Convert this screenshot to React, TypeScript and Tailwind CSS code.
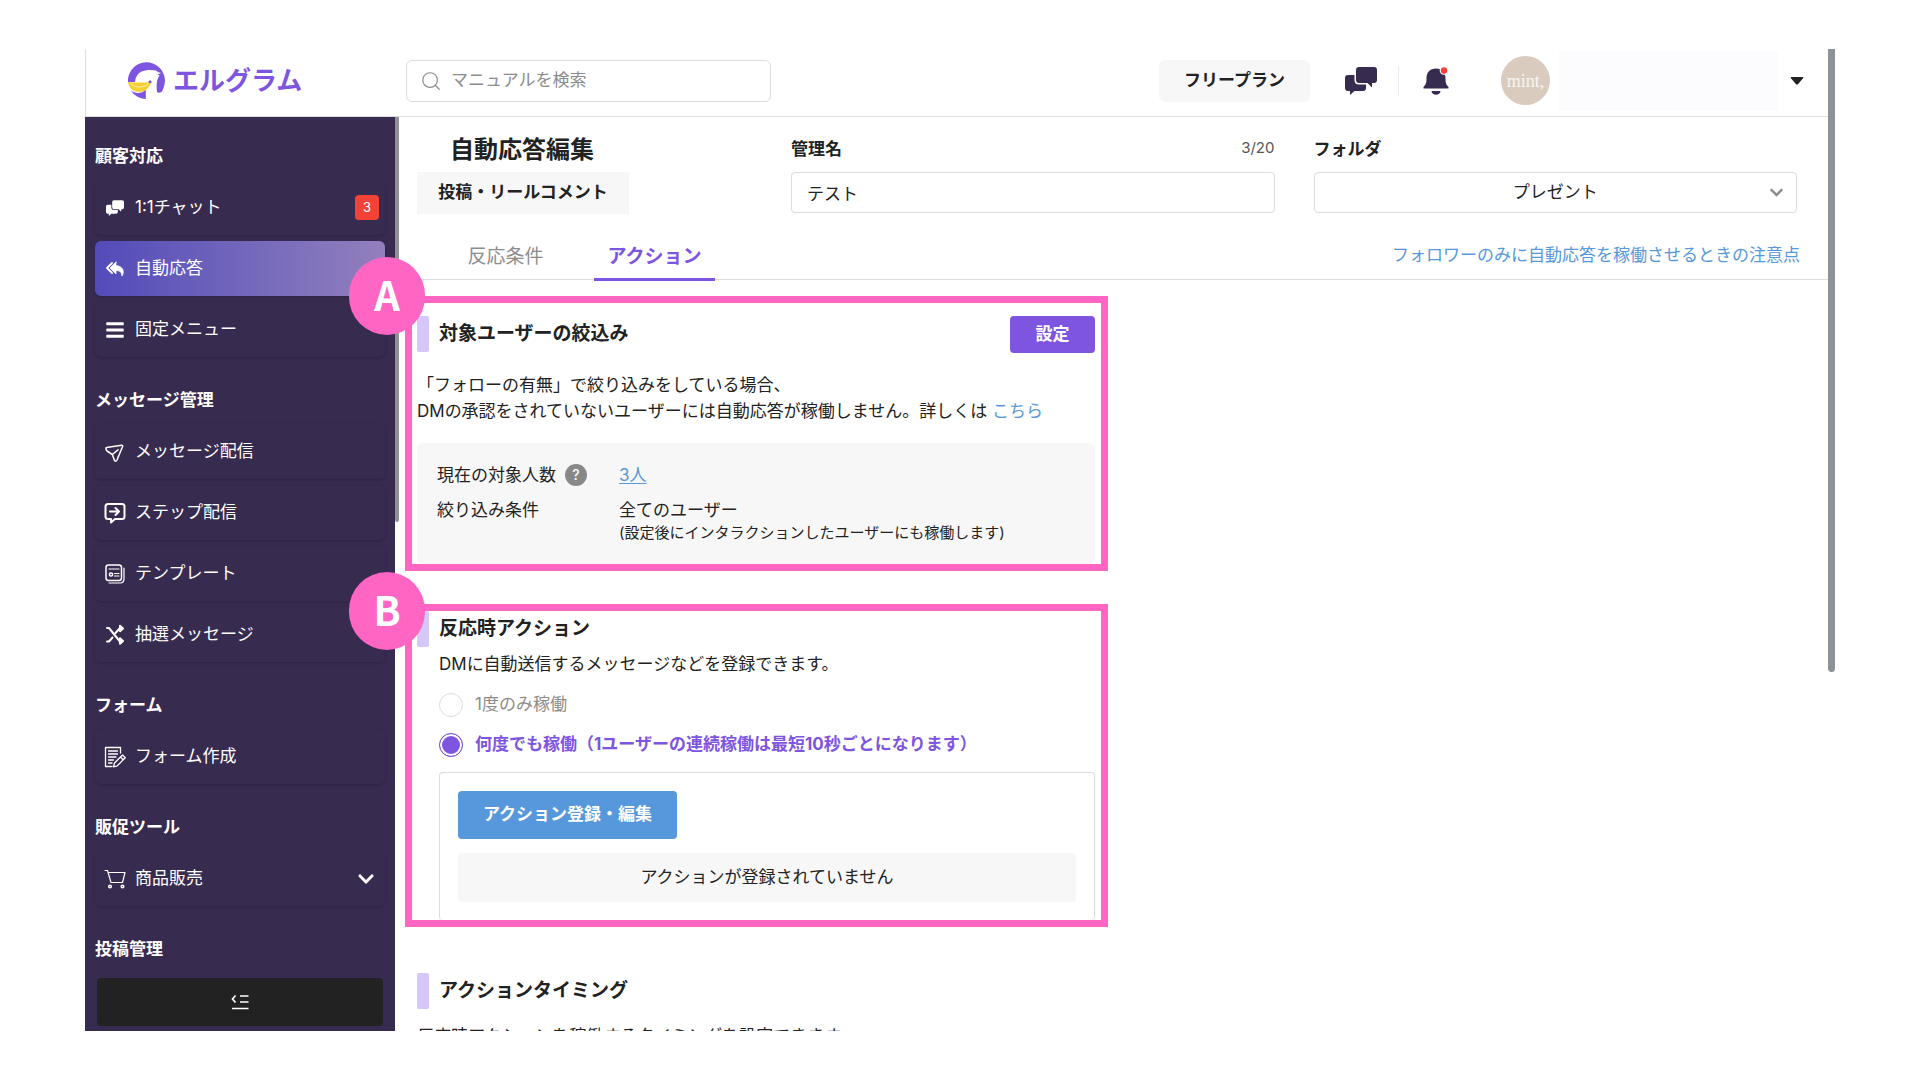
import React, { useState } from 'react';
import { FaBars, FaChevronDown } from 'react-icons/fa';
import { FiSearch } from 'react-icons/fi';

interface MenuItem {
    label: string;
    icon: React.ReactNode;
    badge?: number;
    active?: boolean;
    expandable?: boolean;
}

interface MenuGroup {
    title: string;
    items: MenuItem[];
}

const Logo = () => (
    <svg viewBox="0 0 37 37" className="h-[37px] w-[37px]" aria-hidden="true">
        <path
            d="M0 20 A18.500 18.500 0 1 1 35.500 26 Q34.500 29 33.500 30 Q31 31.500 29 30 C28.200 24 28.500 17 31.500 13.500 L29.500 12.500 L33 11 C31 10.500 29.500 10 28 8.500 C23 7.500 17 7.800 13.500 9.500 C9.500 11.500 7.500 15 7 20 Z"
            fill="#7d55e0"
        />
        <path d="M0 20 C7 21 15 20.500 23 20 C21.500 26 17 30 11 30 C5 30 1 26 0 20 Z" fill="#f8cf30" />
        <path d="M3 21.500 C7 26 15 26.500 20.500 21.500" fill="none" stroke="#fff" strokeWidth="0.700" />
        <path d="M3 28.500 C7.500 32 13.500 31.500 17.800 28 V37 C11.500 36.800 6 33.500 3 28.500 Z" fill="#7d55e0" />
        <circle cx="22" cy="19.800" r="1.500" fill="#7d55e0" />
    </svg>
);

const ChatIcon = ({ className, gap }: { className: string; gap: string }) => (
    <svg viewBox="0 0 32 28" className={className} aria-hidden="true">
        <path d="M3 8 H19 Q21 8 21 10 V21 Q21 24 18 24 H9.500 L5 28 V24 H3 Q0 24 0 21 V11 Q0 8 3 8 Z" fill="currentColor" />
        <path d="M14 0 H29 Q32 0 32 3 V13 Q32 16 29 16 H27 V20.500 L22.500 16 H14 Q11 16 11 13 V3 Q11 0 14 0 Z" fill="currentColor" stroke={gap} strokeWidth="3" paintOrder="stroke" />
    </svg>
);

const BellIcon = () => (
    <svg viewBox="0 0 28 30" className="h-[30px] w-7" aria-hidden="true">
        <path d="M13 2.500 C19 2.500 22.500 6.500 22.500 12 C22.500 17 23 18.500 25.500 21 V22.500 H0.500 V21 C3 18.500 3.500 17 3.500 12 C3.500 6.500 7 2.500 13 2.500 Z" fill="#382b50" />
        <path d="M8.500 25 H17.500 C17.200 27.500 15.500 28.800 13 28.800 C10.500 28.800 8.800 27.500 8.500 25 Z" fill="#382b50" />
        <circle cx="21" cy="4.500" r="4.300" fill="#fff" />
        <circle cx="21" cy="4.500" r="3.200" fill="#f44336" />
    </svg>
);

const LineIcon = ({ children }: { children: React.ReactNode }) => (
    <svg
        viewBox="0 0 22 22"
        className="h-[22px] w-[22px]"
        fill="none"
        stroke="currentColor"
        strokeWidth="1.500"
        strokeLinecap="round"
        strokeLinejoin="round"
        aria-hidden="true"
    >
        {children}
    </svg>
);

const menuGroups: MenuGroup[] = [
    {
        title: '顧客対応',
        items: [
            { label: '1:1チャット', icon: <ChatIcon className="h-4 w-[18px]" gap="#382b50" />, badge: 3 },
            {
                label: '自動応答',
                active: true,
                icon: (
                    <LineIcon>
                        <path d="M8 5 L3 10 L8 15" strokeWidth="1.800" />
                        <path d="M12 4 L6 10 L12 16 V12.500 C16 12.500 17.500 14 18 18 C21 13 18.500 8 12 7.500 Z" fill="currentColor" strokeWidth="0.800" />
                    </LineIcon>
                ),
            },
            { label: '固定メニュー', icon: <FaBars className="h-5 w-5" /> },
        ],
    },
    {
        title: 'メッセージ管理',
        items: [
            {
                label: 'メッセージ配信',
                icon: (
                    <LineIcon>
                        <path d="M2 7.500 Q1.800 6.800 2.600 6.600 L17.500 4.300 Q19 4.200 18.600 5.500 L13 19 Q12 21 10.500 19.500 L8.300 13.500 L3 10 Q1.800 9 2 7.500 Z M8.300 13.500 L14 8.800" />
                    </LineIcon>
                ),
            },
            {
                label: 'ステップ配信',
                icon: (
                    <LineIcon>
                        <path d="M4 2 H18 Q20.500 2 20.500 4.500 V14.500 Q20.500 17 18 17 H11 L7 20.500 V17 H4 Q1.500 17 1.500 14.500 V4.500 Q1.500 2 4 2 Z M6 9.500 H15 M11.500 6 L15 9.500 L11.500 13" strokeWidth="2" />
                    </LineIcon>
                ),
            },
            {
                label: 'テンプレート',
                icon: (
                    <LineIcon>
                        <rect x="2" y="2" width="15.500" height="15.500" rx="2.500" />
                        <path d="M5 20 H16 Q20 20 20 16 V5 M5 6 H15 M10.500 10.500 H15 M10.500 13 H15" strokeWidth="1.200" />
                        <circle cx="7" cy="11.500" r="1.600" />
                    </LineIcon>
                ),
            },
            {
                label: '抽選メッセージ',
                icon: (
                    <LineIcon>
                        <path d="M3 4 H5 L15.500 17 H18 M3 17.500 H5 L8.500 13.500 M11.500 9 L15.500 4.500 H18 M16 1.800 L19 4.500 L16 7.200 Z M16 14.200 L19 17 L16 19.800 Z" strokeWidth="2" />
                    </LineIcon>
                ),
            },
        ],
    },
    {
        title: 'フォーム',
        items: [
            {
                label: 'フォーム作成',
                icon: (
                    <LineIcon>
                        <path d="M16.500 7 V1.500 H1.500 V20.500 H8 M4.500 5 H13.500 M4.500 8 H13.500 M4.500 11 H12 M4.500 14 H9.500 M4.500 17 H8" strokeWidth="1.300" />
                        <path d="M9.500 20.800 L10.500 17 L18.500 9 L21.200 11.800 L13.300 19.800 Z M16.500 11 L19.200 13.800" strokeWidth="1.300" />
                    </LineIcon>
                ),
            },
        ],
    },
    {
        title: '販促ツール',
        items: [
            {
                label: '商品販売',
                expandable: true,
                icon: (
                    <LineIcon>
                        <path d="M1 2.500 H3.500 L7 14.500 H18.500 L21 4.500 H4.200" strokeWidth="1.200" />
                        <circle cx="6" cy="18.500" r="1.300" />
                        <circle cx="18.500" cy="18.500" r="1.300" />
                    </LineIcon>
                ),
            },
        ],
    },
    { title: '投稿管理', items: [] },
];

const Header = () => (
    <header className="flex h-[68px] shrink-0 items-center border-b border-l border-[#dedede] pr-6 pb-1 pl-[42px]">
        <a href="#top" className="flex w-[278px] shrink-0 items-center gap-2">
            <Logo />
            <span className="text-[26px] leading-8 font-bold text-[#7d55e0]">エルグラム</span>
        </a>
        <label className="flex h-[42px] w-[365px] items-center gap-[9px] rounded-md border border-[#dcdcdc] px-[13px] text-[#8c8c8c]">
            <FiSearch className="h-[22px] w-[22px]" strokeWidth={1.3} />
            <input
                type="text"
                aria-label="マニュアルを検索"
                placeholder="マニュアルを検索"
                className="min-w-0 flex-1 outline-none placeholder:text-[#8c8c8c]"
            />
        </label>
        <div className="ml-auto flex items-center">
            <button type="button" className="h-[42px] w-[151px] rounded-md bg-[#f7f7f7] font-bold">
                フリープラン
            </button>
            <button type="button" aria-label="チャット" className="ml-[35px] text-[#382b50]">
                <ChatIcon className="h-7 w-8" gap="#ffffff" />
            </button>
            <div className="ml-[21px] h-[30px] w-px bg-[#ebebeb]" />
            <button type="button" aria-label="お知らせ" className="ml-6">
                <BellIcon />
            </button>
            <div className="ml-[50px] flex h-[49px] w-[49px] items-center justify-center rounded-full bg-[#d9ccbe] text-lg font-normal text-white/80 font-['Liberation_Serif',serif]">
                mint,
            </div>
            <div className="ml-[9px] h-[60px] w-[219px] bg-[#fcfcff]" />
            <button type="button" aria-label="アカウントメニュー" className="ml-3">
                <svg viewBox="0 0 14 8" className="h-2 w-[14px]" aria-hidden="true">
                    <path d="M1.500 0 H12.500 Q14 0 13 1.300 L8 7.200 Q7 8 6 7.200 L1 1.300 Q0 0 1.500 0 Z" fill="#222" />
                </svg>
            </button>
        </div>
    </header>
);

const Sidebar = () => (
    <aside className="flex w-[310px] shrink-0 flex-col bg-[#382b50] text-white">
        <nav className="flex min-h-0 flex-1 flex-col gap-[31px] overflow-hidden px-[10px] pt-[27px]">
            {menuGroups.map((group) => (
                <div key={group.title} className="shrink-0">
                    <h2 className="mb-3 leading-6 font-bold">{group.title}</h2>
                    <ul className="flex flex-col gap-[6px]">
                        {group.items.map((item) => (
                            <li key={item.label}>
                                <a
                                    href="#menu"
                                    className={`flex h-[55px] items-center rounded-md pr-[6px] pl-2 shadow-[0_1px_3px_rgba(0,0,0,0.2)] ${
                                        item.active ? 'bg-linear-to-r from-[#534bb9] to-[#937fbd]' : ''
                                    }`}
                                >
                                    <span className="mr-2 flex w-6 justify-center">{item.icon}</span>
                                    {item.label}
                                    {item.badge && (
                                        <span className="ml-auto flex h-[25px] w-6 items-center justify-center rounded bg-[#f44336] text-[13px]">
                                            {item.badge}
                                        </span>
                                    )}
                                    {item.expandable && <FaChevronDown className="mr-1 ml-auto h-[18px] w-[18px]" />}
                                </a>
                            </li>
                        ))}
                    </ul>
                </div>
            ))}
        </nav>
        <div className="px-3 pb-[5px]">
            <button
                type="button"
                aria-label="メニューを閉じる"
                className="flex h-12 w-full items-center justify-center rounded bg-[#222222]"
            >
                <svg viewBox="0 0 18 16" className="h-4 w-[18px]" fill="none" stroke="#fff" strokeWidth="1.700" aria-hidden="true">
                    <path d="M9 2 H17.500 M9 8 H17.500 M1 14.500 H17.500 M4.500 1.500 L1.500 5 L4.500 8.500" />
                </svg>
            </button>
        </div>
    </aside>
);

const SectionTitle = ({ children }: { children: React.ReactNode }) => (
    <div className="flex h-9 items-center gap-[10px]">
        <span className="h-9 w-3 rounded-xs bg-[#d5c7fa]" />
        <h2 className="text-[19px] leading-7 font-bold">{children}</h2>
    </div>
);

interface CalloutProps {
    mark: string;
    className: string;
    markClassName: string;
    children: React.ReactNode;
}

const Callout = ({ mark, className, markClassName, children }: CalloutProps) => (
    <section className={`relative w-[703px] border-[7px] border-[#ff66c4] pr-[6px] pl-[5px] ${className}`}>
        {children}
        <span
            className={`absolute -left-[63px] flex h-[78px] w-[76px] items-center justify-center rounded-full bg-[#ff66c4] pb-1 text-[40px] leading-10 font-bold text-white font-['Noto_Sans_CJK_JP',sans-serif] ${markClassName}`}
        >
            {mark}
        </span>
    </section>
);

const App: React.FC = () => {
    const [name, setName] = useState('テスト');
    const [frequency, setFrequency] = useState('many');

    const radioClass =
        "relative h-6 w-6 shrink-0 appearance-none rounded-full border border-[#dcdcdc] checked:border-[#7d55e0] checked:bg-[#7d55e0] checked:shadow-[inset_0_0_0_2px_#fff]";

    return (
        <div className="flex h-screen bg-white px-[85px] py-[49px] text-[17px] text-[#222222] font-[Inter,'Noto_Sans_CJK_JP',sans-serif]">
            <div className="flex min-w-0 flex-1 overflow-hidden">
                <div className="flex min-w-0 flex-1 flex-col">
                    <Header />
                    <div className="flex min-h-0 flex-1">
                        <Sidebar />
                        <div className="h-[405px] w-1 shrink-0 rounded-b-full bg-[#8f9294]" />

                        <main className="min-w-0 flex-1">
                            <div className="grid grid-cols-[335px_1fr_1fr] gap-x-[39px] pt-[19px] pr-[31px] pl-[18px]">
                                <div>
                                    <h1 className="pl-[33px] text-2xl leading-7 font-bold">自動応答編集</h1>
                                    <div className="mt-2 flex h-[42px] w-[212px] items-center justify-center bg-[#f7f7f7] font-bold">
                                        投稿・リールコメント
                                    </div>
                                </div>
                                <div>
                                    <div className="flex h-7 items-center justify-between">
                                        <label htmlFor="name" className="font-bold">管理名</label>
                                        <span className="pb-1 text-[15px] text-[#555555]">{name.length}/20</span>
                                    </div>
                                    <input
                                        type="text"
                                        id="name"
                                        value={name}
                                        onChange={(e) => setName(e.target.value)}
                                        className="mt-2 h-[41px] w-full rounded border border-[#dcdcdc] px-[15px]"
                                    />
                                </div>
                                <div>
                                    <div className="flex h-7 items-center">
                                        <label htmlFor="folder" className="font-bold">フォルダ</label>
                                    </div>
                                    <div className="relative mt-2">
                                        <select
                                            id="folder"
                                            className="h-[41px] w-full appearance-none rounded border border-[#dcdcdc] pt-px text-center [text-align-last:center]"
                                        >
                                            <option>プレゼント</option>
                                        </select>
                                        <FaChevronDown className="pointer-events-none absolute top-[13px] right-[13px] h-[15px] w-[15px] text-[#8c8c8c]" />
                                    </div>
                                </div>
                            </div>

                            <div className="flex h-[66px] items-end justify-between border-b border-[#dcdcdc] pr-7 pl-11">
                                <div className="-mb-[2px] flex gap-[26px] text-[19px]">
                                    <button type="button" className="h-[51px] w-[125px] pt-1 text-[#8c8c8c]">
                                        反応条件
                                    </button>
                                    <button
                                        type="button"
                                        className="h-[51px] w-[121px] border-b-3 border-[#7d55e0] pt-[7px] font-bold text-[#7d55e0]"
                                    >
                                        アクション
                                    </button>
                                </div>
                                <a href="#notes" className="pb-[11px] text-[#5698db]">
                                    フォロワーのみに自動応答を稼働させるときの注意点
                                </a>
                            </div>

                            <Callout mark="A" markClassName="-top-[46px]" className="mt-4 ml-[6px] h-[275px]">
                                <div className="flex items-start justify-between pt-[13px]">
                                    <SectionTitle>対象ユーザーの絞込み</SectionTitle>
                                    <button type="button" className="h-[37px] w-[85px] rounded bg-[#7d55e0] font-bold text-white">
                                        設定
                                    </button>
                                </div>
                                <p className="mt-[19px] leading-[26px]">
                                    「フォローの有無」で絞り込みをしている場合、
                                    <br />
                                    DMの承認をされていないユーザーには自動応答が稼働しません。詳しくは{' '}
                                    <a href="#details" className="text-[#5698db]">こちら</a>
                                </p>
                                <dl className="mt-[19px] grid grid-cols-[182px_1fr] gap-y-[9px] rounded-md bg-[#f7f7f7] px-5 pt-[19px] pb-[21px] leading-[26px]">
                                    <dt className="flex items-center gap-[9px]">
                                        現在の対象人数
                                        <span className="flex h-[22px] w-[22px] items-center justify-center rounded-full bg-[#888888] text-sm font-medium text-white">
                                            ?
                                        </span>
                                    </dt>
                                    <dd>
                                        <a href="#users" className="text-[#5698db] underline underline-offset-2">3人</a>
                                    </dd>
                                    <dt>絞り込み条件</dt>
                                    <dd>
                                        全てのユーザー
                                        <div className="text-[15px] leading-5">(設定後にインタラクションしたユーザーにも稼働します)</div>
                                    </dd>
                                </dl>
                            </Callout>

                            <Callout mark="B" markClassName="-top-[39px]" className="mt-[33px] ml-[6px] h-[323px]">
                                <SectionTitle>反応時アクション</SectionTitle>
                                <div className="ml-[22px]">
                                    <p className="mt-1 leading-[26px]">DMに自動送信するメッセージなどを登録できます。</p>
                                    <label className="mt-4 flex h-6 items-center gap-3 text-[#8c8c8c]">
                                        <input
                                            type="radio"
                                            name="frequency"
                                            checked={frequency === 'once'}
                                            onChange={() => setFrequency('once')}
                                            className={radioClass}
                                        />
                                        1度のみ稼働
                                    </label>
                                    <label className="mt-4 flex h-6 items-center gap-3 font-bold text-[#7d55e0]">
                                        <input
                                            type="radio"
                                            name="frequency"
                                            checked={frequency === 'many'}
                                            onChange={() => setFrequency('many')}
                                            className={radioClass}
                                        />
                                        何度でも稼働（1ユーザーの連続稼働は最短10秒ごとになります）
                                    </label>
                                    <div className="mt-[15px] rounded border border-b-0 border-[#dcdcdc] p-[18px]">
                                        <button type="button" className="h-12 w-[219px] rounded bg-[#5698db] font-bold text-white">
                                            アクション登録・編集
                                        </button>
                                        <p className="mt-[14px] flex h-[49px] items-center justify-center rounded bg-[#f7f7f7]">
                                            アクションが登録されていません
                                        </p>
                                    </div>
                                </div>
                            </Callout>

                            <section className="mt-[46px] ml-[18px]">
                                <SectionTitle>アクションタイミング</SectionTitle>
                                <p className="mt-[14px] leading-[26px]">反応時アクションを稼働するタイミングを設定できます。</p>
                            </section>
                        </main>
                    </div>
                </div>
                <div className="h-[623px] w-[7px] shrink-0 rounded-b-full bg-[#8f9294]" />
            </div>
        </div>
    );
};

export default App;
